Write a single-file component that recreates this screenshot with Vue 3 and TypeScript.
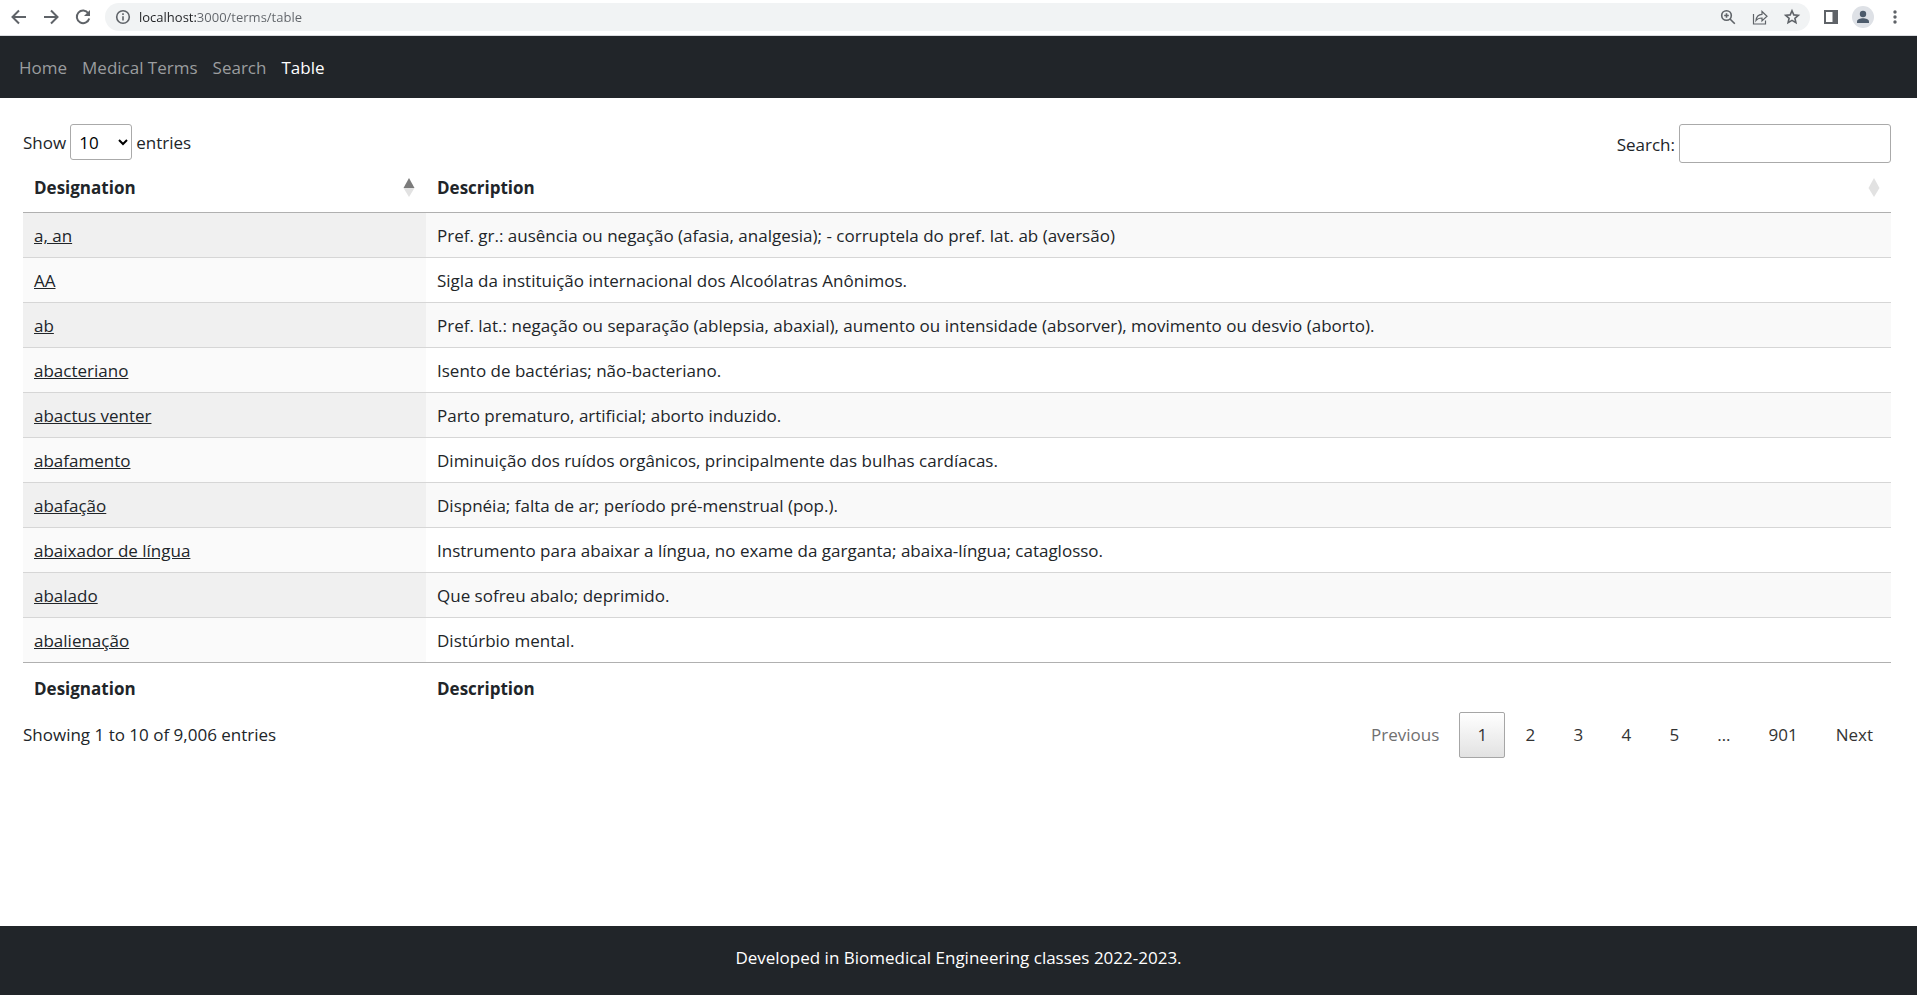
<script setup lang="ts">
import { ref } from 'vue'

interface Term {
  designation: string
  description: string
}

const navLinks = [
  { label: 'Home', href: '#home', active: false },
  { label: 'Medical Terms', href: '#terms', active: false },
  { label: 'Search', href: '#search', active: false },
  { label: 'Table', href: '#table', active: true },
]

const terms: Term[] = [
  { designation: 'a, an', description: 'Pref. gr.: ausência ou negação (afasia, analgesia); - corruptela do pref. lat. ab (aversão)' },
  { designation: 'AA', description: 'Sigla da instituição internacional dos Alcoólatras Anônimos.' },
  { designation: 'ab', description: 'Pref. lat.: negação ou separação (ablepsia, abaxial), aumento ou intensidade (absorver), movimento ou desvio (aborto).' },
  { designation: 'abacteriano', description: 'Isento de bactérias; não-bacteriano.' },
  { designation: 'abactus venter', description: 'Parto prematuro, artificial; aborto induzido.' },
  { designation: 'abafamento', description: 'Diminuição dos ruídos orgânicos, principalmente das bulhas cardíacas.' },
  { designation: 'abafação', description: 'Dispnéia; falta de ar; período pré-menstrual (pop.).' },
  { designation: 'abaixador de língua', description: 'Instrumento para abaixar a língua, no exame da garganta; abaixa-língua; cataglosso.' },
  { designation: 'abalado', description: 'Que sofreu abalo; deprimido.' },
  { designation: 'abalienação', description: 'Distúrbio mental.' },
]

const address = ref('localhost:3000/terms/table')
const pageSize = ref(10)
const query = ref('')
const page = ref(1)
</script>

<template>
  <div class="window">
    <div class="toolbar">
      <button class="tool" aria-label="Back">
        <svg width="20" height="20" viewBox="0 0 20 20"><path d="M17 10H4M10 3.5 3.5 10l6.500 6.500" /></svg>
      </button>
      <button class="tool" aria-label="Forward">
        <svg width="20" height="20" viewBox="0 0 20 20"><path d="M3 10h13M10 3.500 16.500 10 10 16.500" /></svg>
      </button>
      <button class="tool" aria-label="Reload">
        <svg width="20" height="20" viewBox="0 0 20 20"><path d="M15.300 6.300A6.300 6.300 0 1 0 16.200 11.500" /><path class="solid" d="M17 3v6h-6z" /></svg>
      </button>
      <div class="omnibox">
        <button class="tool info" aria-label="View site information">
          <svg width="16" height="16" viewBox="0 0 16 16"><circle cx="8" cy="8" r="6.300" /><path d="M8 7.200v4.300M8 4.300v1.700" /></svg>
        </button>
        <input v-model="address" class="address" type="text" aria-label="Address" />
        <button class="tool" aria-label="Zoom">
          <svg width="18" height="18" viewBox="0 0 18 18"><g class="thin"><circle cx="7.500" cy="7.500" r="4.800" /><path d="M11 11l4.800 4.800M5.200 7.500h4.600M7.500 5.200v4.600" /></g></svg>
        </button>
        <button class="tool" aria-label="Share">
          <svg width="18" height="18" viewBox="0 0 18 18"><g class="hair"><path d="M2.500 6v10h12v-3.500" /><path d="M5 12.500c.4-4 2.500-6 6-6.200V3.500l5 4.700-5 4.700V10c-2.800 0-4.700.8-6 2.500z" /></g></svg>
        </button>
        <button class="tool" aria-label="Bookmark this page">
          <svg width="18" height="18" viewBox="0 0 18 18"><path class="thin" d="M9 2.800l1.800 4.100 4.500.4-3.400 3 1 4.400L9 12.400l-3.900 2.300 1-4.400-3.400-3 4.500-.4z" /></svg>
        </button>
      </div>
      <button class="tool" aria-label="Side panel">
        <svg width="18" height="18" viewBox="0 0 18 18"><path class="solid" d="M2 2h14v14H2zM4 4v10h6.500V4z" fill-rule="evenodd" /></svg>
      </button>
      <button class="tool" aria-label="Profile">
        <svg width="22" height="22" viewBox="0 0 22 22"><circle class="avatar" cx="11" cy="11" r="11" /><g class="person"><circle cx="11" cy="8" r="3.200" /><path d="M5 17v-1.500c0-2.200 3.500-3.200 6-3.200s6 1 6 3.200V17z" /></g></svg>
      </button>
      <button class="tool" aria-label="Menu">
        <svg width="18" height="18" viewBox="0 0 18 18"><g class="solid"><circle cx="9" cy="4" r="1.700" /><circle cx="9" cy="9" r="1.700" /><circle cx="9" cy="14" r="1.700" /></g></svg>
      </button>
    </div>

    <nav class="navbar">
      <a v-for="link in navLinks" :key="link.label" :href="link.href" :class="{ active: link.active }">{{ link.label }}</a>
    </nav>

    <main class="content">
      <div class="controls">
        <div class="length">
          <label for="page-size">Show</label>
          <select id="page-size" v-model="pageSize">
            <option :value="10">10</option>
            <option :value="25">25</option>
            <option :value="50">50</option>
            <option :value="100">100</option>
          </select>
          <span>entries</span>
        </div>
        <div class="filter">
          <label for="filter">Search:</label>
          <input id="filter" v-model="query" type="search" />
        </div>
      </div>

      <table class="terms">
        <thead>
          <tr>
            <th class="name" scope="col" aria-sort="ascending">
              <div class="heading">
                <span>Designation</span>
                <svg width="12" height="20" viewBox="0 0 12 20"><path class="on" d="M6 0l5.500 10H.5z" /><path class="off" d="M.5 10h11L6 19z" /></svg>
              </div>
            </th>
            <th scope="col">
              <div class="heading">
                <span>Description</span>
                <svg width="12" height="20" viewBox="0 0 12 20"><path class="off" d="M6 0l5.500 10L6 19 .5 10z" /></svg>
              </div>
            </th>
          </tr>
        </thead>
        <tbody>
          <tr v-for="term in terms" :key="term.designation">
            <td><a href="#term">{{ term.designation }}</a></td>
            <td>{{ term.description }}</td>
          </tr>
        </tbody>
        <tfoot>
          <tr>
            <th scope="col">Designation</th>
            <th scope="col">Description</th>
          </tr>
        </tfoot>
      </table>

      <div class="summary">
        <span class="count">Showing 1 to 10 of 9,006 entries</span>
        <div class="pages">
          <button disabled>Previous</button>
          <button v-for="n in 5" :key="n" :class="{ current: page === n }" @click="page = n">{{ n }}</button>
          <span class="gap">…</span>
          <button @click="page = 901">901</button>
          <button @click="page++">Next</button>
        </div>
      </div>
    </main>

    <footer class="footer">Developed in Biomedical Engineering classes 2022-2023.</footer>
  </div>
</template>

<style>
body {
  margin: 0;
  background: #fff;
}
</style>

<style scoped>
.window {
  display: flex;
  flex-direction: column;
  min-height: 100vh;
  font-family: "Open Sans", "Noto Sans", sans-serif;
  font-size: 17px;
  line-height: 26px;
  color: #212529;
}
.window * {
  box-sizing: border-box;
}
button,
input,
select {
  font: inherit;
}

.toolbar {
  display: flex;
  align-items: center;
  gap: 12px;
  height: 36px;
  padding: 0 13px 2px 9px;
  border-bottom: 1px solid #dadce0;
}
.tool {
  display: flex;
  padding: 0;
  border: 0;
  background: none;
}
.tool svg {
  fill: none;
  stroke: #5f6368;
  stroke-width: 2;
}
.tool .thin {
  stroke-width: 1.6;
}
.tool .hair {
  stroke-width: 1.2;
}
.tool .solid {
  fill: #5f6368;
  stroke: none;
}
.tool .avatar {
  fill: #dee1e6;
  stroke: none;
}
.tool .person {
  fill: #4d5b6b;
  stroke: none;
}
.omnibox {
  display: flex;
  flex: 1;
  align-items: center;
  gap: 14px;
  height: 28px;
  padding: 0 9px 0 10px;
  border-radius: 14px;
  background: #f1f3f4;
}
.info svg {
  stroke-width: 1.6;
}
.address {
  flex: 1;
  min-width: 0;
  height: 20px;
  margin-left: -6px;
  padding: 0;
  border: 0;
  font-size: 13px;
  line-height: 20px;
  color: #5f6368;
  background: linear-gradient(to right, #202124 57px, #5f6368 57px);
  background-clip: text;
  -webkit-text-fill-color: transparent;
}

.navbar {
  display: flex;
  align-items: center;
  gap: 15px;
  height: 62px;
  padding: 2px 19px 0;
  background: #212529;
}
.navbar a {
  color: #9b9d9f;
  text-decoration: none;
}
.navbar a.active {
  color: #fff;
}

.content {
  flex: 1;
  padding: 26px 26px 24px 23px;
}
.controls {
  display: flex;
  justify-content: space-between;
  align-items: flex-start;
}
.length,
.filter {
  display: flex;
  align-items: center;
  gap: 4px;
}
.controls label,
.controls span {
  padding-top: 2px;
}
.length select {
  width: 62px;
  height: 36px;
  padding: 4px;
  border: 1px solid #aaa;
  border-radius: 3px;
  color: #000;
  background-color: transparent;
}
.filter input {
  width: 212px;
  height: 39px;
  padding: 5px;
  border: 1px solid #aaa;
  border-radius: 3px;
  background: transparent;
}

.terms {
  width: 100%;
  border-collapse: separate;
  border-spacing: 0;
}
.terms th {
  height: 50px;
  padding: 0 11px;
  font-weight: 700;
  text-align: left;
}
.terms thead th {
  border-bottom: 1px solid #b0b0b0;
}
.terms tfoot th {
  height: 49px;
  padding-top: 2px;
}
.terms .name {
  width: 403px;
}
.heading {
  display: flex;
  align-items: center;
  justify-content: space-between;
}
.heading .on {
  fill: #7b7b7b;
}
.heading .off {
  fill: #e2e2e2;
}
.terms td {
  height: 45px;
  padding: 2px 11px 0;
  border-bottom: 1px solid #d6d6d6;
}
.terms tbody tr:last-child td {
  border-bottom-color: #b0b0b0;
}
.terms tbody tr:nth-child(odd) td {
  background: #f9f9f9;
}
.terms tbody tr:nth-child(odd) td:first-child {
  background: #f0f0f0;
}
.terms tbody tr:nth-child(even) td {
  background: #fff;
}
.terms tbody tr:nth-child(even) td:first-child {
  background: #fafafa;
}
.terms a {
  color: inherit;
}

.summary {
  display: flex;
  justify-content: space-between;
  align-items: center;
}
.pages {
  display: flex;
  align-items: center;
  gap: 2px;
}
.pages button,
.gap {
  min-width: 46px;
  height: 46px;
  padding: 0 17px;
  border: 1px solid transparent;
  border-radius: 2px;
  color: #333;
  background: none;
}
.gap {
  line-height: 44px;
}
.pages button:disabled {
  color: #707070;
}
.pages button.current {
  border-color: #a6a6a6;
  background: linear-gradient(#fff, #e2e2e2);
}

.footer {
  height: 69px;
  padding: 19px 18px 0;
  text-align: center;
  color: #fff;
  background: #212529;
}
</style>
